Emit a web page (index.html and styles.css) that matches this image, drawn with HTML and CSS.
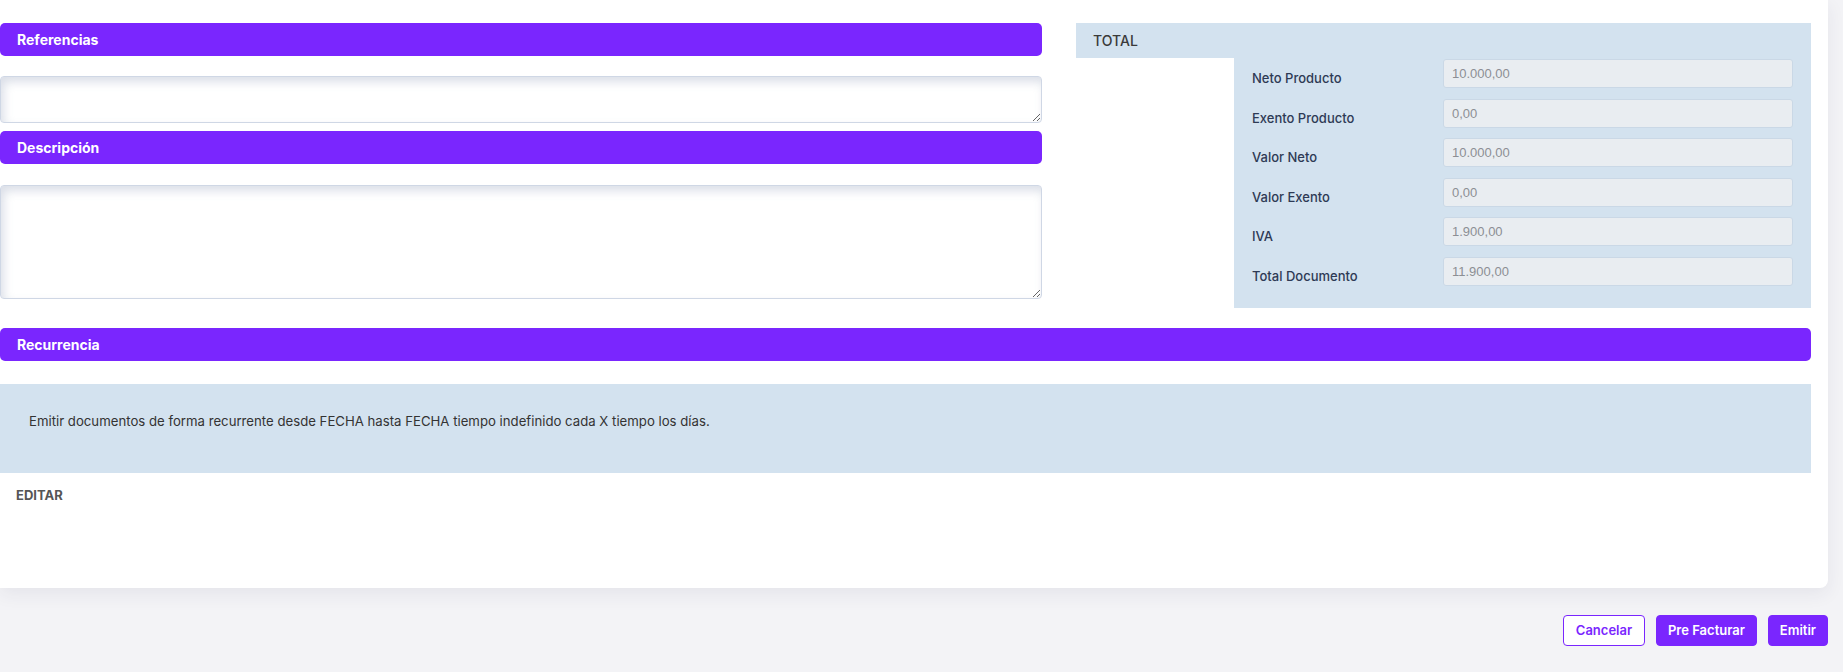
FILE: index.html
```html
<!DOCTYPE html>
<html lang="es">
<head>
<meta charset="utf-8">
<title>Documento</title>
<link rel="stylesheet" href="styles.css">
</head>
<body>
<div class="page">
  <div class="card">
    <div class="top">
      <div class="left">
        <div class="bar">Referencias</div>
        <textarea class="ta ta-sm"></textarea>
        <div class="bar bar-desc">Descripción</div>
        <textarea class="ta ta-lg"></textarea>
      </div>
      <div class="right">
        <div class="total-head">TOTAL</div>
        <div class="total-panel">
          <div class="row"><span class="lbl">Neto Producto</span><input class="val" value="10.000,00" readonly></div>
          <div class="row"><span class="lbl">Exento Producto</span><input class="val" value="0,00" readonly></div>
          <div class="row"><span class="lbl">Valor Neto</span><input class="val" value="10.000,00" readonly></div>
          <div class="row"><span class="lbl">Valor Exento</span><input class="val" value="0,00" readonly></div>
          <div class="row"><span class="lbl">IVA</span><input class="val" value="1.900,00" readonly></div>
          <div class="row"><span class="lbl">Total Documento</span><input class="val" value="11.900,00" readonly></div>
        </div>
      </div>
    </div>
    <div class="bar bar-rec">Recurrencia</div>
    <div class="info">Emitir documentos de forma recurrente desde FECHA hasta FECHA tiempo indefinido cada X tiempo los días.</div>
    <div class="edit">EDITAR</div>
  </div>
  <div class="actions">
    <button class="btn btn-outline">Cancelar</button>
    <button class="btn btn-solid">Pre Facturar</button>
    <button class="btn btn-solid">Emitir</button>
  </div>
</div>
</body>
</html>
```
FILE: styles.css
```css
* { box-sizing: border-box; }
html, body { margin: 0; padding: 0; }
body {
  background: #f3f3f6;
  font-family: Inter, "Open Sans", "Liberation Sans", sans-serif;
  color: #333;
  height: 672px;
  overflow: hidden;
}
.page {
  padding-right: 15px;
}
.card {
  background: #fff;
  border-radius: 0 0 8px 0;
  box-shadow: 0 6px 18px rgba(40, 40, 80, 0.07);
  padding: 23px 17px 85px 0;
}
.top {
  display: grid;
  grid-template-columns: 1042px 735px;
  column-gap: 34px;
  align-items: start;
}
.left {
  display: flex;
  flex-direction: column;
}
.bar {
  background: #7a26fe;
  color: #fff;
  font-weight: 700;
  font-size: 14px;
  height: 33px;
  line-height: 33px;
  padding-left: 17px;
  border-radius: 5px;
}
.bar-desc { margin-top: 8px; }
.bar-rec { margin-top: 20px; }
.ta {
  display: block;
  width: 100%;
  margin: 20px 0 0 0;
  border: 1px solid #cfd7e5;
  border-radius: 4px;
  background: #fff;
  box-shadow: inset 3px 5px 10px rgba(160, 170, 195, 0.38);
  resize: vertical;
  font: 13px Inter, sans-serif;
  padding: 6px 8px;
}
.ta-sm { height: 47px; }
.ta-lg { height: 114px; margin-top: 21px; }

.right {
  display: flex;
  flex-direction: column;
}
.total-head {
  background: #d3e2ef;
  height: 35px;
  line-height: 35px;
  padding-left: 17px;
  font-size: 14px;
  font-weight: 500;
  color: #3a3a3a;
}
.total-panel {
  margin-left: 158px;
  background: #d3e2ef;
  padding: 1px 18px 22px 18px;
  display: flex;
  flex-direction: column;
  gap: 10.5px;
}
.row {
  display: flex;
  align-items: flex-start;
}
.lbl {
  width: 191px;
  flex: none;
  padding-top: 11px;
  font-size: 13px;
  line-height: 16px;
  font-weight: 500;
  color: #2e3a55;
}
.val {
  flex: 1;
  height: 29px;
  border: 1px solid #cad8e6;
  border-radius: 3px;
  background: #e9edf1;
  font-family: "Liberation Sans", Arial, sans-serif;
  font-size: 13px;
  color: #8c8f94;
  padding: 0 8px;
  outline: none;
}
.info {
  margin-top: 23px;
  background: #d3e2ef;
  height: 89px;
  padding: 29px 29px 0;
  font-size: 13.2px;
  line-height: 16px;
  color: #333;
}
.edit {
  margin-top: 14px;
  padding-left: 16px;
  font-size: 13px;
  line-height: 16px;
  font-weight: 700;
  color: #555;
}
.actions {
  display: flex;
  justify-content: flex-end;
  gap: 11px;
  margin-top: 27px;
}
.btn {
  height: 31px;
  border-radius: 4px;
  font-family: Inter, "Open Sans", sans-serif;
  font-size: 13px;
  font-weight: 600;
  padding: 0 11px;
  cursor: pointer;
}
.btn-outline {
  background: #fff;
  color: #7a26fe;
  border: 1px solid #7a26fe;
  width: 82px;
}
.btn-solid {
  background: #7a26fe;
  color: #fff;
  border: 1px solid #7a26fe;
}
```
